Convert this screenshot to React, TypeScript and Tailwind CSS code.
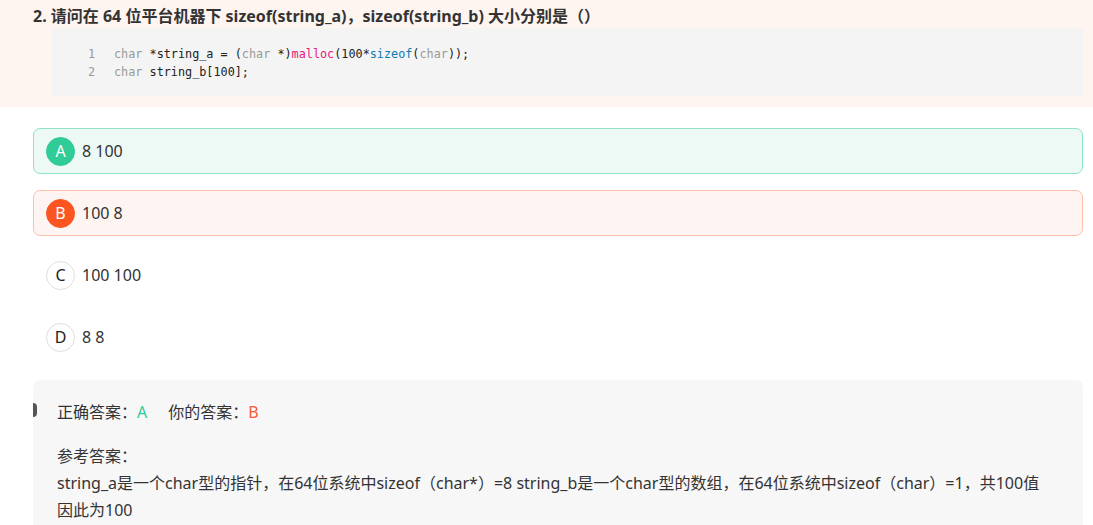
const FONT = { fontFamily: '"Microsoft YaHei", "Noto Sans", "Noto Sans CJK SC", sans-serif' }
const MONO = { fontFamily: 'Consolas, "DejaVu Sans Mono", "Liberation Mono", monospace' }

type Opt = { key: string; text: string; state: 'right' | 'wrong' | 'none' }

const OPTIONS: Opt[] = [
  { key: 'A', text: '8 100', state: 'right' },
  { key: 'B', text: '100 8', state: 'wrong' },
  { key: 'C', text: '100 100', state: 'none' },
  { key: 'D', text: '8 8', state: 'none' },
]

function Option({ o }: { o: Opt }) {
  const box =
    o.state === 'right'
      ? 'border-[#8fe3c6] bg-[#edf9f5]'
      : o.state === 'wrong'
        ? 'border-[#fcc0ab] bg-[#fef4f1]'
        : 'border-transparent bg-white'
  const dot =
    o.state === 'right'
      ? 'bg-[#30cc98] text-white border-[#30cc98]'
      : o.state === 'wrong'
        ? 'bg-[#fd5522] text-white border-[#fd5522]'
        : 'bg-white text-[#222] border-[#dedede]'
  return (
    <div className={`h-[46px] flex items-center pl-[12px] border rounded-[7px] ${box}`}>
      <span className={`w-[29px] h-[29px] rounded-full border flex items-center justify-center text-[16px] ${dot}`}>{o.key}</span>
      <span className="ml-[7px] text-[16px] text-[#333]">{o.text}</span>
    </div>
  )
}

export default function App() {
  return (
    <div className="w-[1093px] h-[525px] overflow-hidden bg-white" style={FONT}>
      {/* question */}
      <div className="bg-[#fef4f0] pl-[33px] pr-[10px] pt-[5px] h-[107px]">
        <h2 className="text-[16px] font-bold text-[#333] leading-[22px]">
          2. 请问在 64 位平台机器下 sizeof(string_a)，sizeof(string_b) 大小分别是（）
        </h2>
        <div className="ml-[19px] mt-[1px] w-[1031px] h-[68px] bg-[#f4f4f4] pt-[17px] pl-[36px] text-[11.8px] leading-[18px]" style={MONO}>
          <div className="flex">
            <span className="w-[26px] text-[#999]">1</span>
            <span className="text-[#222]">
              <span className="text-[#999]">char</span> *string_a = (<span className="text-[#999]">char</span> *)
              <span className="text-[#e6197d]">malloc</span>(100*<span className="text-[#0d7ab5]">sizeof</span>(<span className="text-[#999]">char</span>));
            </span>
          </div>
          <div className="flex">
            <span className="w-[26px] text-[#999]">2</span>
            <span className="text-[#222]">
              <span className="text-[#999]">char</span> string_b[100];
            </span>
          </div>
        </div>
      </div>

      {/* options */}
      <div className="pl-[33px] pr-[10px] pt-[21px] flex flex-col gap-[16px]">
        {OPTIONS.map(o => <Option key={o.key} o={o} />)}
      </div>

      {/* analysis */}
      <div className="ml-[33px] mr-[10px] mt-[20px] h-[160px] bg-[#f7f7f7] rounded-t-[7px] pt-[20px] pl-[24px] text-[16px] text-[#333] relative">
        <span className="absolute left-0 top-[23px] w-[4px] h-[14px] bg-[#555] rounded-r" />
        <div className="leading-[24px]">
          正确答案：<span className="text-[#30cc98]">A</span>
          <span className="ml-[21px]">你的答案：</span><span className="text-[#f55a3a]">B</span>
        </div>
        <div className="mt-[19px] leading-[27px]">
          <div>参考答案：</div>
          <div>string_a是一个char型的指针，在64位系统中sizeof（char*）=8 string_b是一个char型的数组，在64位系统中sizeof（char）=1，共100值</div>
          <div>因此为100</div>
        </div>
      </div>
    </div>
  )
}
